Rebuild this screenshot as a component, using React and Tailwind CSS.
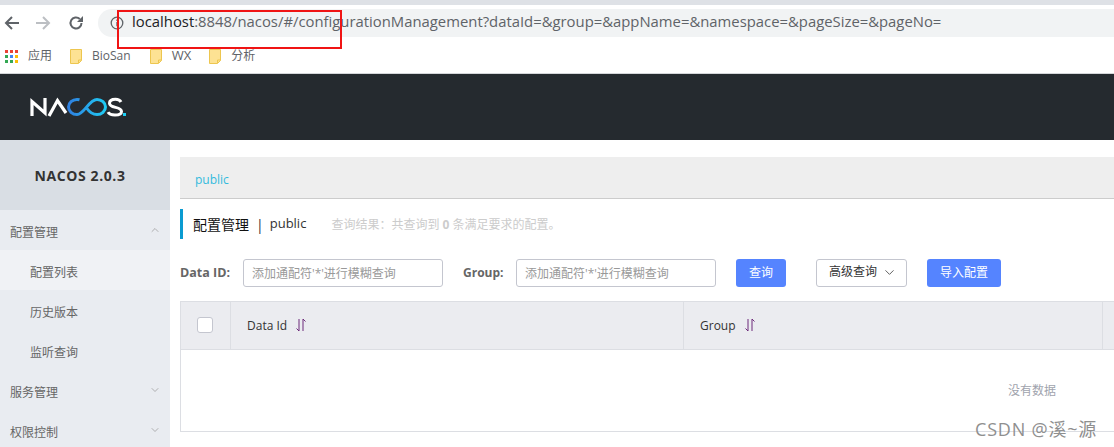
import { ChevronDown, ChevronUp } from 'lucide-react';

const SANS = { fontFamily: '"Open Sans", "Noto Sans CJK SC", sans-serif' };

const Folder = () => (
  <svg width="12" height="15" viewBox="0 0 12 15" className="shrink-0">
    <path d="M.5.5h11v11l-3 3h-8z" fill="#fde293" stroke="#edc64f" />
    <path d="M8.5 14v-3h3" fill="none" stroke="#edc64f" />
  </svg>
);

const AppsGrid = () => {
  const colors = ['#ea4335', '#ea4335', '#ea4335', '#34a853', '#4285f4', '#fbbc05', '#34a853', '#34a853', '#fbbc05'];
  return (
    <div className="grid grid-cols-3 gap-[2px] w-[13px] h-[13px] shrink-0">
      {colors.map((c, i) => (
        <span key={i} className="w-[3px] h-[3px]" style={{ backgroundColor: c }} />
      ))}
    </div>
  );
};

const BrowserBar = () => (
  <div className="h-[74px] bg-white border-b border-[#d4d6d9]">
    <div className="h-[5px] bg-[#dee1e6]" />
    <div className="h-[32px] flex items-center">
      <svg width="16" height="16" viewBox="0 0 16 16" className="ml-[4px] mt-[4px]" fill="none" stroke="#5f6368" strokeWidth="2">
        <path d="M15 8H2M8 2 2 8l6 6" />
      </svg>
      <svg width="16" height="16" viewBox="0 0 16 16" className="ml-[15px] mt-[4px]" fill="none" stroke="#bcbfc3" strokeWidth="2">
        <path d="M1 8h13M8 2l6 6-6 6" />
      </svg>
      <svg width="16" height="16" viewBox="0 0 16 16" className="ml-[17px] mt-[4px]" fill="none" stroke="#5f6368" strokeWidth="2">
        <path d="M13.500 8a5.500 5.500 0 1 1-1.700-4" />
        <path d="M15 1v6H9z" fill="#5f6368" stroke="none" />
      </svg>
      <div className="ml-[14px] flex-1 h-[28px] mt-[4px] bg-[#f1f3f4] rounded-l-full flex items-center pl-[12px]">
        <svg width="14" height="14" viewBox="0 0 14 14" fill="none" stroke="#5f6368" strokeWidth="1.3">
          <circle cx="7" cy="7" r="5.8" />
          <path d="M7 6v4.2M7 3.6v1.4" />
        </svg>
        <span className="ml-[8px] mb-[3px] text-[14.85px] leading-none text-[#5f6368] whitespace-nowrap" style={SANS}>
          <span className="text-[#202124]">localhost</span>:8848/nacos/#/configurationManagement?dataId=&amp;group=&amp;appName=&amp;namespace=&amp;pageSize=&amp;pageNo=
        </span>
      </div>
    </div>
    <div className="h-[36px] flex items-center pl-[5px] pt-[2px] text-[12px] text-[#5f6368]" style={SANS}>
      <AppsGrid />
      <span className="ml-[10px]">应用</span>
      <div className="ml-[18px]"><Folder /></div>
      <span className="ml-[10px]">BioSan</span>
      <div className="ml-[19px]"><Folder /></div>
      <span className="ml-[10px] text-[13px]">WX</span>
      <div className="ml-[18px]"><Folder /></div>
      <span className="ml-[10px]">分析</span>
    </div>
  </div>
);

const Logo = () => (
  <svg width="98" height="22" viewBox="0 0 98 22" className="ml-[30px]">
    <defs>
      <linearGradient id="loop" gradientUnits="userSpaceOnUse" x1="38" x2="78" y1="0" y2="0">
        <stop offset="0" stopColor="#2f7fe0" />
        <stop offset="1" stopColor="#1ed0f5" />
      </linearGradient>
    </defs>
    <path d="M2 20V5.500L15 17V2" fill="none" stroke="#fff" strokeWidth="3.200" />
    <path d="M19 20 27.500 4.500 36 17" fill="none" stroke="#fff" strokeWidth="3.200" />
    <path d="M49.500 3.800c-.8-.2-1.500-.3-2.500-.3-4.700 0-8.500 3.400-8.500 7.500s3.800 7.500 8.500 7.500c7 0 12-15 20-15 4.700 0 8.500 3.400 8.500 7.500s-3.800 7.500-8.500 7.500c-5 0-8-3-10-6" fill="none" stroke="url(#loop)" strokeWidth="3" />
    <path d="M91 6c-1-2-3-2.800-5.500-2.800-3.500 0-6 1.300-6 4 0 5.500 12 2.800 12 8.300 0 2.800-2.800 3.500-6.500 3.500-3 0-6-.8-7-2.800" fill="none" stroke="#fff" strokeWidth="3" />
    <rect x="93" y="17" width="3" height="3" fill="#1ed0f5" />
  </svg>
);

const MenuItem = ({ label, icon, active, sub }) => (
  <div className={`h-[40px] flex items-center justify-between text-[12px] text-[#666] ${sub ? 'pl-[30px]' : 'pl-[10px]'} pr-[9px] ${active ? 'bg-[#f0f2f5]' : ''}`}>
    <span className="pt-[6px]">{label}</span>
    {icon}
  </div>
);

const Sidebar = () => (
  <div className="w-[170px] shrink-0 bg-[#e9ecf1]">
    <div className="h-[70px] bg-[#d9dee4] flex items-center justify-center pt-[1px] pr-[10px] text-[14px] font-bold text-[#333] tracking-[0.6px]" style={{ fontFamily: '"Open Sans", sans-serif' }}>
      NACOS 2.0.3
    </div>
    <MenuItem label="配置管理" icon={<ChevronUp size={12} color="#999" strokeWidth={1.5} />} />
    <MenuItem label="配置列表" sub active />
    <MenuItem label="历史版本" sub />
    <MenuItem label="监听查询" sub />
    <MenuItem label="服务管理" icon={<ChevronDown size={12} color="#999" strokeWidth={1.5} />} />
    <MenuItem label="权限控制" icon={<ChevronDown size={12} color="#999" strokeWidth={1.5} />} />
  </div>
);

const SortIcon = () => (
  <svg width="12" height="14" viewBox="0 0 12 14" className="ml-[8px] mb-[2px]" fill="none" stroke="#6d2a7a" strokeWidth="1">
    <path d="M4 1v12L1.500 10.500M8 13V1l2.500 2.500" />
  </svg>
);

const PLACEHOLDER = '添加通配符\'*\'进行模糊查询';

const SearchInput = ({ width }) => (
  <div className={`${width} h-[28px] shrink-0 border border-[#c4c6cf] rounded-[3px] flex items-center pl-[8px] pt-[1px] text-[12px] text-[#999]`}>
    {PLACEHOLDER}
  </div>
);

const ConfigList = () => (
  <div className="flex-1 min-w-0 overflow-hidden pl-[10px] pt-[17px]">
    <div className="w-[1000px] h-[42px] bg-[#eeeeee] border-b border-[#cccccc] flex items-center pl-[15px] pt-[5px] text-[12px] text-[#33bbdd]">
      public
    </div>

    <div className="mt-[10px] h-[30px] flex items-center border-l-[3px] border-[#0a9bd1] pl-[10px] whitespace-nowrap">
      <span className="text-[14px] text-[#111]">配置管理</span>
      <span className="text-[14px] text-[#333] ml-[7px]">|</span>
      <span className="text-[13px] text-[#333] ml-[6px]">public</span>
      <span className="text-[12px] text-[#ccc] ml-[25px] pt-[2px]">查询结果：共查询到 <b className="text-[#ccc]">0</b> 条满足要求的配置。</span>
    </div>

    <div className="mt-[20px] h-[28px] flex items-center whitespace-nowrap">
      <span className="w-[63px] text-[12.500px] font-bold text-[#666]">Data ID:</span>
      <SearchInput width="w-[200px]" />
      <span className="w-[53px] ml-[20px] text-[12px] font-bold text-[#666]">Group:</span>
      <SearchInput width="w-[200px]" />
      <button className="ml-[20px] w-[50px] h-[28px] bg-[#5584ff] rounded-[3px] text-[12px] text-white">查询</button>
      <button className="ml-[30px] w-[91px] h-[28px] border border-[#c4c6cf] rounded-[3px] text-[12px] text-[#333] flex items-center justify-center gap-[5px] pl-[3px] pb-[2px]">
        高级查询
        <ChevronDown size={15} color="#555" strokeWidth={1.5} />
      </button>
      <button className="ml-[20px] w-[74px] h-[28px] bg-[#5584ff] rounded-[3px] text-[12px] text-white">导入配置</button>
    </div>

    <div className="mt-[14px] w-[1000px] h-[131px] border-t border-b border-l border-[#dcdee3]">
      <div className="h-[48px] flex items-stretch bg-[#ebecf0] border-b border-[#dcdee3] text-[12px] text-[#333]">
        <div className="w-[50px] border-r border-[#dcdee3] flex items-center justify-center pr-[2px] pb-[2px]">
          <span className="w-[16px] h-[16px] bg-white border border-[#c4c6cf] rounded-[3px]" />
        </div>
        <div className="w-[453px] border-r border-[#dcdee3] flex items-center pl-[16px]">
          Data Id
          <SortIcon />
        </div>
        <div className="w-[419px] border-r border-[#dcdee3] flex items-center pl-[16px]">
          Group
          <SortIcon />
        </div>
      </div>
      <div className="h-[81px] w-[875px] flex items-center justify-end pt-[1px] text-[12px] text-[#a0a3ad]">
        没有数据
      </div>
    </div>
  </div>
);

const App = () => (
  <div className="relative w-[1114px] h-[447px] overflow-hidden bg-white" style={SANS}>
    <BrowserBar />
    <div className="h-[66px] bg-[#252a2f] flex items-center"><Logo /></div>
    <div className="flex h-[307px]">
      <Sidebar />
      <ConfigList />
    </div>
    {/* annotation drawn over the screenshot */}
    <div className="absolute left-[117px] top-[10px] w-[225px] h-[39px] border-2 border-[#f01414]" />
    <div className="absolute left-[975px] top-[416px] text-[18px] leading-[26px] tracking-[0.8px] text-[#8f8f8f]">CSDN @溪~源</div>
  </div>
);

export default App;
